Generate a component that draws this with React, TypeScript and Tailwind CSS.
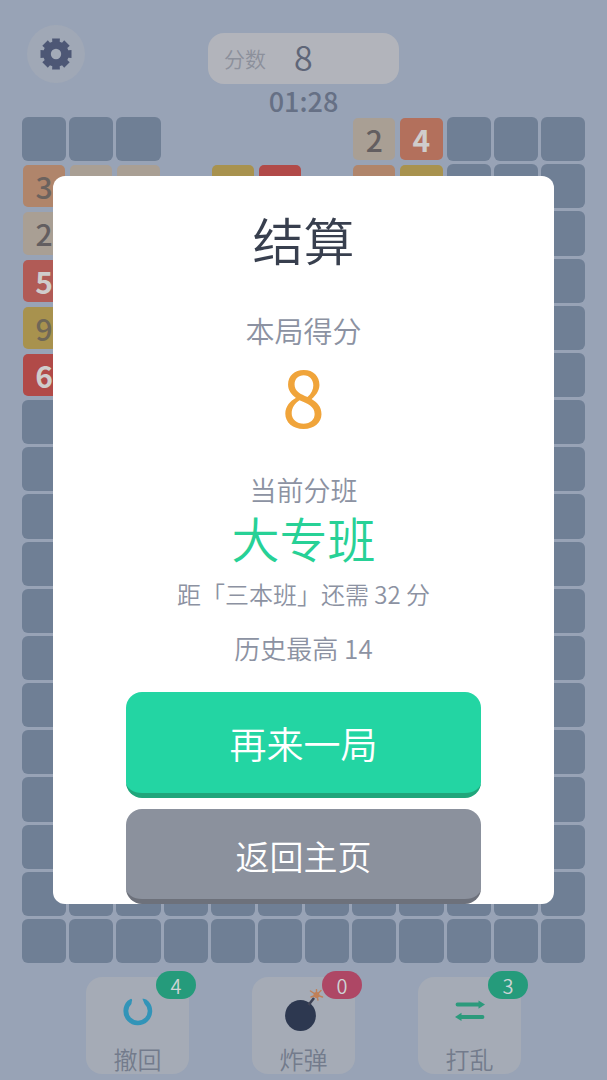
import type { ReactNode } from 'react'
import clsx from 'clsx'

// '#' blocked cell, '.' free cell, digit = numbered tile
const BOARD = [
  '###....24###',
  '322.96.39###',
  '2..........#',
  '5..........#',
  '9..........#',
  '6..........#',
  ...Array<string>(12).fill('############'),
]

const TILE_STYLES: Record<string, string> = {
  '2': 'bg-[#a99f94] font-medium text-[#635e60]',
  '3': 'bg-[#b0856b] font-medium text-[#6b625e]',
  '4': 'bg-[#b3705c] font-bold text-[#cfcdcc]',
  '5': 'bg-[#b15b56] font-bold text-[#cfcdcc]',
  '6': 'bg-[#b14a48] font-bold text-[#cfcdcc]',
  '9': 'bg-[#a8924e] font-medium text-[#6f6757]',
}

function Cell({ value }: { value: string }) {
  if (value === '.') return <div className="aspect-square" />
  if (value === '#') return <div className="aspect-square rounded-md bg-[#6f7f95]" />
  return (
    <div className="aspect-square p-px">
      <div
        className={clsx(
          'flex h-full items-center justify-center rounded-[5px] text-3xl leading-none',
          TILE_STYLES[value],
        )}
      >
        {value}
      </div>
    </div>
  )
}

function GearIcon() {
  return (
    <svg className="size-8" viewBox="-16 -16 32 32" aria-hidden="true">
      <g fill="#4d5775">
        <circle r="12.8" />
        {[0, 45, 90, 135, 180, 225, 270, 315].map((angle) => (
          <path key={angle} d="M-3.6-10L-3.9-15.5H3.9L3.6-10Z" transform={`rotate(${angle})`} />
        ))}
      </g>
      <circle r="5.2" fill="#a3aab7" />
    </svg>
  )
}

function UndoIcon() {
  return (
    <svg className="size-8" viewBox="-16 -16 32 32" aria-hidden="true">
      <path
        d="M-10.4-10.2L-7-12.2Q-5.2-11.8-6.2-9.6L-6.6-7.1A9.7 9.7 0 1 0 6.6-7.1L4.4-12.2Q8-12.9 10.6-9.6A14.4 14.4 0 1 1-10.4-10.2Z"
        fill="#3294b8"
      />
    </svg>
  )
}

function BombIcon() {
  return (
    <svg className="size-11" viewBox="0 0 44 44" fill="none" aria-hidden="true">
      <circle cx="18.5" cy="26.5" r="15.4" fill="#2d3850" />
      <path d="M26.5 16L32 9" stroke="#3f4355" strokeWidth="2.6" />
      <path
        d="M34.5 6V.5M34.5 6L28.5 2M34.5 6L29 8M34.5 6L36 11M34.5 6L40.5 8M34.5 6L39 1.5"
        stroke="#c08058"
        strokeWidth="1.4"
        strokeLinecap="round"
      />
      <circle cx="34.5" cy="6" r="3" fill="#c08058" />
    </svg>
  )
}

function ShuffleIcon() {
  return (
    <svg className="size-8" viewBox="0 0 32 32" fill="none" aria-hidden="true">
      <path d="M3.5 9.5H26M28.5 22H6" stroke="#2c9a7c" strokeWidth="3.8" strokeLinecap="round" />
      <path d="M24.5 5.5L31 9.5L24.5 13.7Z" fill="#2c9a7c" />
      <path d="M7.5 17.8L1 22L7.5 26Z" fill="#2c9a7c" />
    </svg>
  )
}

interface ToolButtonProps {
  label: string
  count: number
  children: ReactNode
}

function ToolButton({ label, count, children }: ToolButtonProps) {
  return (
    <button className="relative flex w-[103px] flex-col items-center justify-between rounded-2xl bg-[#a5abb6]">
      <span className="flex h-[68px] items-center justify-center">{children}</span>
      <span className="text-2xl leading-[30px] font-[350] text-[#737b8c]">{label}</span>
      <span
        className={clsx(
          'absolute -top-1.5 -right-[7px] flex h-7 w-10 items-center justify-center rounded-full pt-0.5 text-xl leading-none font-[350] text-[#cdd3d5]',
          count > 0 ? 'bg-[#259b7b]' : 'bg-[#ae4765]',
        )}
      >
        {count}
      </span>
    </button>
  )
}

export default function App() {
  return (
    <div
      lang="zh-CN"
      className="min-h-screen bg-[#98a3b6] font-['Noto_Sans_CJK_SC','Noto_Sans',sans-serif]"
    >
      <header className="grid grid-cols-[1fr_auto_1fr] items-start px-[27px] pt-[25px]">
        <button
          aria-label="设置"
          className="flex size-[58px] items-center justify-center rounded-full bg-[#a0a8b6]"
        >
          <GearIcon />
        </button>
        <div className="flex flex-col items-center pt-2">
          <div className="flex h-[51px] w-[191px] items-center gap-7 rounded-2xl bg-[#b2b4bb] px-4 font-[350]">
            <span className="text-[21px] text-[#8c909b]">分数</span>
            <span className="pb-1 text-[34px] leading-none text-[#5f6678]">8</span>
          </div>
          <time className="text-[27px] leading-[33px] font-medium text-[#667085]">01:28</time>
        </div>
      </header>

      <main className="grid grid-cols-12 gap-[3px] px-[22px]">
        {BOARD.flatMap((row, y) => [...row].map((value, x) => <Cell key={`${x}-${y}`} value={value} />))}
      </main>

      <footer className="mt-[14px] flex h-[97px] justify-center gap-[63px]">
        <ToolButton label="撤回" count={4}>
          <UndoIcon />
        </ToolButton>
        <ToolButton label="炸弹" count={0}>
          <BombIcon />
        </ToolButton>
        <ToolButton label="打乱" count={3}>
          <ShuffleIcon />
        </ToolButton>
      </footer>

      <div className="fixed inset-0 flex items-center justify-center">
        <section
          role="dialog"
          aria-labelledby="result-title"
          className="flex w-[82.6%] flex-col items-center rounded-xl bg-white pt-8 text-center font-[350] text-[#8c92a2]"
        >
          <h2 id="result-title" className="text-[51px] leading-[62px] font-[350] text-[#383f4e]">
            结算
          </h2>
          <p className="mt-10 text-[29px] leading-10">本局得分</p>
          <p className="text-[78px] leading-[88px] font-normal text-[#f0a43a]">8</p>
          <p className="mt-8 text-[27px] leading-10">当前分班</p>
          <p className="text-5xl leading-[54px] text-[#27d196]">大专班</p>
          <p className="mt-[10px] text-2xl leading-10">距「三本班」还需 32 分</p>
          <p className="mt-[14px] text-[26px] leading-10">历史最高 14</p>
          <div className="mt-6 flex w-[71%] flex-col gap-[11px] text-white">
            <button className="h-[106px] rounded-2xl border-b-[5px] border-[#20a67b] bg-[#23d5a3] pt-0.5 text-[37px]">
              再来一局
            </button>
            <button className="h-[95px] rounded-2xl border-b-[5px] border-[#6d717b] bg-[#8b919d] pt-0.5 text-[34px]">
              返回主页
            </button>
          </div>
        </section>
      </div>
    </div>
  )
}
